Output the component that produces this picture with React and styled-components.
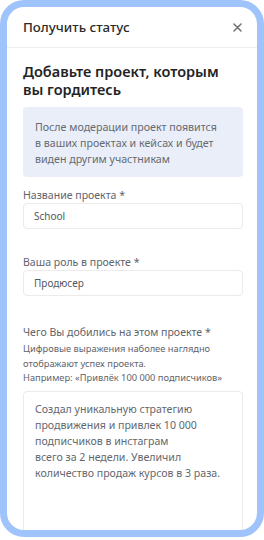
import React from "react";
import styled, { createGlobalStyle } from "styled-components";

const Global = createGlobalStyle`
  html, body { margin: 0; padding: 0; background: #ffffff; }
  body { font-family: "Noto Sans", "Open Sans", sans-serif; }
  * { box-sizing: border-box; }
`;

const Frame = styled.div`
  width: 264px;
  height: 537px;
  border: 7px solid #9fc3fb;
  border-radius: 24px;
  background: #ffffff;
  overflow: hidden;
  display: flex;
  flex-direction: column;
`;

const Header = styled.div`
  height: 41px;
  flex: none;
  display: flex;
  align-items: center;
  justify-content: space-between;
  padding: 0 15px 0 16px;
  border-bottom: 1px solid #ededed;
`;

const HeaderTitle = styled.div`
  font-size: 13.3px;
  font-weight: 500;
  color: #2b2b2b;
  white-space: nowrap;
`;

const Close = styled.button`
  border: none;
  background: none;
  padding: 0;
  width: 10px;
  height: 10px;
  display: flex;
  align-items: center;
  justify-content: center;
`;

const Body = styled.div`
  padding: 14px 14px 0 16px;
  display: flex;
  flex-direction: column;
`;

const Title = styled.h2`
  margin: 0;
  font-size: 14.5px;
  line-height: 18px;
  font-weight: 600;
  color: #232323;
  white-space: nowrap;
`;

const Info = styled.div`
  margin-top: 9px;
  background: #e9eef8;
  border-radius: 4px;
  padding: 12px 12px 10px;
  font-size: 10.65px;
  line-height: 16px;
  color: #656a72;
  white-space: pre-line;
`;

const Field = styled.div`
  margin-top: ${(p) => p.$gap}px;
  display: flex;
  flex-direction: column;
`;

const Label = styled.div`
  font-size: 10.55px;
  line-height: 14px;
  color: #5f646c;
  margin-bottom: 1px;
  white-space: nowrap;
`;

const Hint = styled.div`
  font-size: 9.3px;
  line-height: 14.5px;
  color: #5f646c;
  margin-top: 2px;
  margin-bottom: 5px;
  white-space: pre-line;
`;

const Input = styled.div`
  height: 26px;
  border: 1px solid #ebebeb;
  border-radius: 4px;
  padding: 0 10px;
  display: flex;
  align-items: center;
  font-size: 10px;
  color: #53575e;
`;

const TextArea = styled.div`
  border: 1px solid #ebebeb;
  border-radius: 4px;
  padding: 9px 11px;
  height: 200px;
  font-size: 10.6px;
  line-height: 16px;
  color: #63676e;
  white-space: pre-line;
`;

export default function App() {
  return (
    <>
      <Global />
      <Frame>
        <Header>
          <HeaderTitle>Получить статус</HeaderTitle>
          <Close aria-label="close">
            <svg width="9" height="9" viewBox="0 0 9 9">
              <path d="M1 1L8 8M8 1L1 8" stroke="#707070" strokeWidth="1.5" strokeLinecap="round" />
            </svg>
          </Close>
        </Header>
        <Body>
          <Title>
            Добавьте проект, которым
            <br />
            вы гордитесь
          </Title>
          <Info>{"После модерации проект появится\nв ваших проектах и кейсах и будет\nвиден другим участникам"}</Info>
          <Field $gap={11}>
            <Label>Название проекта *</Label>
            <Input>School</Input>
          </Field>
          <Field $gap={26}>
            <Label>Ваша роль в проекте *</Label>
            <Input>Продюсер</Input>
          </Field>
          <Field $gap={29}>
            <Label>Чего Вы добились на этом проекте *</Label>
            <Hint>{"Цифровые выражения наболее наглядно\nотображают успех проекта.\nНапример: «Привлёк 100 000 подписчиков»"}</Hint>
            <TextArea>
              {"Создал уникальную стратегию\nпродвижения и привлек 10 000\nподписчиков в инстаграм\nвсего за 2 недели. Увеличил\nколичество продаж курсов в 3 раза."}
            </TextArea>
          </Field>
        </Body>
      </Frame>
    </>
  );
}
